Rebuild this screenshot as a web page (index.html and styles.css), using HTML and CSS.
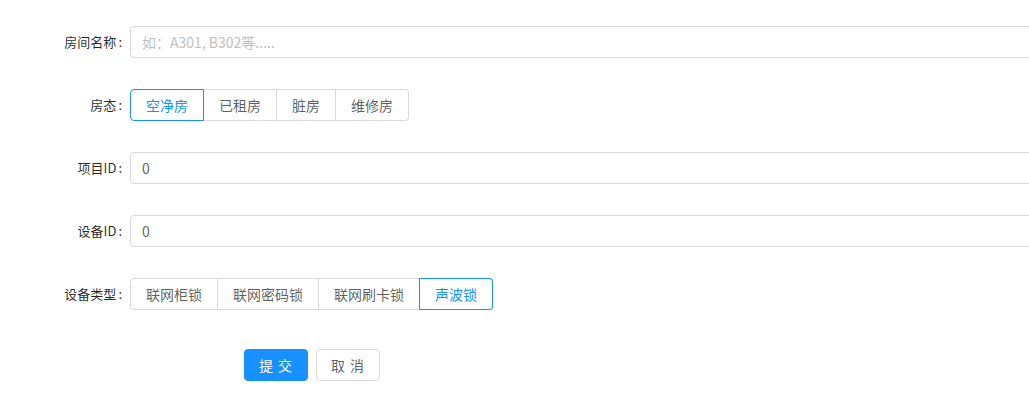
FILE: index.html
```html
<!doctype html>
<html lang="zh-CN">
  <head>
    <meta charset="UTF-8" />
    <title>房间编辑</title>
    <link rel="stylesheet" href="styles.css">
  </head>
  <body>
    <form class="room-form">
      <div class="form-row">
        <label class="form-label">房间名称</label>
        <input class="form-input" type="text" placeholder="如：A301, B302等....." />
      </div>

      <div class="form-row">
        <label class="form-label">房态</label>
        <div class="radio-group">
          <span class="radio-btn checked">空净房</span>
          <span class="radio-btn">已租房</span>
          <span class="radio-btn">脏房</span>
          <span class="radio-btn">维修房</span>
        </div>
      </div>

      <div class="form-row">
        <label class="form-label">项目ID</label>
        <input class="form-input" type="text" value="0" />
      </div>

      <div class="form-row">
        <label class="form-label">设备ID</label>
        <input class="form-input" type="text" value="0" />
      </div>

      <div class="form-row">
        <label class="form-label">设备类型</label>
        <div class="radio-group">
          <span class="radio-btn">联网柜锁</span>
          <span class="radio-btn">联网密码锁</span>
          <span class="radio-btn">联网刷卡锁</span>
          <span class="radio-btn checked">声波锁</span>
        </div>
      </div>

      <div class="form-actions">
        <button type="button" class="btn btn-primary">提 交</button>
        <button type="button" class="btn">取 消</button>
      </div>
    </form>
  </body>
</html>
```

FILE: styles.css
```css
body {
  margin: 0;
  overflow: hidden;
  font-family: "Noto Sans CJK SC", "Liberation Sans", sans-serif;
  font-size: 14px;
  color: rgba(0, 0, 0, 0.65);
  background: #fff;
}
.room-form {
  width: 1100px;
  padding-top: 26px;
}
.form-row {
  display: grid;
  grid-template-columns: 130px 1fr;
  align-items: center;
  margin-bottom: 31px;
}
.form-label {
  text-align: right;
  line-height: 32px;
  color: rgba(0, 0, 0, 0.85);
  font-size: 13px;
}
.form-label::after {
  content: ":";
  margin: 0 8px 0 2px;
}
.form-input {
  box-sizing: border-box;
  height: 32px;
  width: 100%;
  padding: 4px 11px;
  border: 1px solid #d9d9d9;
  border-radius: 4px;
  font-family: inherit;
  font-size: 14px;
  color: rgba(0, 0, 0, 0.65);
  outline: none;
}
.form-input::placeholder {
  color: #bfbfbf;
}
.radio-group {
  display: flex;
}
.radio-btn {
  box-sizing: border-box;
  height: 32px;
  line-height: 30px;
  padding: 0 15px;
  border: 1px solid #d9d9d9;
  border-left-width: 0;
  font-size: 14px;
  white-space: nowrap;
}
.radio-btn:first-child {
  border-left-width: 1px;
  border-radius: 4px 0 0 4px;
}
.radio-btn:last-child {
  border-radius: 0 4px 4px 0;
}
.radio-btn.checked {
  color: #1890ff;
  border-color: #1890ff;
  box-shadow: -1px 0 0 0 #1890ff;
}
.radio-btn.checked:first-child {
  box-shadow: none;
}
.form-actions {
  display: flex;
  gap: 8px;
  margin-top: 39px;
  padding-left: 244px;
}
.btn {
  height: 32px;
  width: 64px;
  border: 1px solid #d9d9d9;
  border-radius: 4px;
  background: #fff;
  font-family: inherit;
  font-size: 14px;
  color: rgba(0, 0, 0, 0.65);
  letter-spacing: 1px;
}
.btn-primary {
  background: #1890ff;
  border-color: #1890ff;
  color: #fff;
}
```
